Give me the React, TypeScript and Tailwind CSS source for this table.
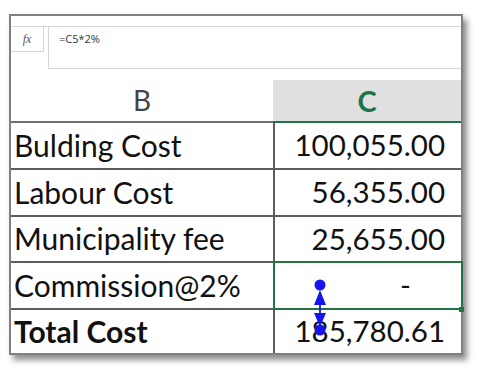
const rows = [
  { label: "Bulding Cost", value: "100,055.00", h: "h-[47px]" },
  { label: "Labour Cost", value: "56,355.00", h: "h-[47px]" },
  { label: "Municipality fee", value: "25,655.00", h: "h-[46px]" },
  { label: "Commission@2%", value: "-", h: "h-[47px]", selected: true },
  { label: "Total Cost", value: "185,780.61", h: "h-[43px]", bold: true },
];

function TraceArrow() {
  return (
    <svg className="absolute left-[310px] top-[270px]" width="20" height="72" viewBox="0 0 20 72">
      <circle cx="10" cy="15" r="5.5" fill="#1515f0" />
      <polygon points="10,20 4,35 16,35" fill="#1515f0" />
      <line x1="10" y1="30" x2="10" y2="50" stroke="#1515f0" strokeWidth="1.8" />
      <polygon points="10,57 4,43 16,43" fill="#1515f0" />
      <circle cx="10" cy="60" r="5.5" fill="#1515f0" />
    </svg>
  );
}

export default function App() {
  return (
    <div className="relative w-[479px] h-[375px] bg-white pt-[14px] pl-[9px] font-['Lato',sans-serif]">
      <div className="w-[454px] h-[341px] border-2 border-[#808080] flex flex-col shadow-[4px_5px_6px_rgba(0,0,0,0.45)]">
        {/* formula bar */}
        <div className="h-[11px] border-b border-[#d6d6d6]" />
        <div className="flex h-[44px]">
          <div className="w-[33px] h-[25px] border-r border-b border-[#d6d6d6] flex items-center justify-center">
            <span className="font-['Liberation_Serif',serif] italic text-[12px] text-[#555]">fx</span>
          </div>
          <div className="ml-[4px] flex-1 border-l border-b border-[#d6d6d6] pl-[10px] pt-[4px] text-[11px] text-[#333] font-['Open_Sans',sans-serif]">
            =C5*2%
          </div>
        </div>
        <div className="h-[11px]" />

        {/* column headers */}
        <div className="flex h-[43px]">
          <div className="w-[262px] border-b-2 border-[#6e6e6e] flex items-center justify-center text-[28px] text-[#444]">
            B
          </div>
          <div className="flex-1 bg-[#e0e0e0] border-b-2 border-[#217346] flex items-center justify-center text-[29px] font-bold text-[#217346]">
            C
          </div>
        </div>

        {rows.map((r, i) => (
          <div key={i} className={`flex ${r.h} ${i < rows.length - 1 ? "border-b-2 border-[#5c5c5c]" : ""}`}>
            <div className={`w-[262px] pl-[3px] flex items-center text-[30px] text-[#111] ${r.bold ? "font-bold" : ""}`}>
              {r.label}
            </div>
            <div
              className={`relative flex-1 border-l-2 flex items-center justify-end text-[29.5px] text-[#111] ${
                r.selected ? "border-[#217346] pr-[50px]" : "border-[#5c5c5c] pr-[16px]"
              }`}
            >
              {r.value}
              {r.selected && (
                <>
                  <div className="absolute inset-x-[-2px] top-[-2px] bottom-[-2px] border-2 border-[#217346]" />
                  <div className="absolute right-[-3px] bottom-[-4px] w-[5px] h-[5px] bg-[#217346]" />
                </>
              )}
            </div>
          </div>
        ))}
      </div>
      <TraceArrow />
    </div>
  );
}
